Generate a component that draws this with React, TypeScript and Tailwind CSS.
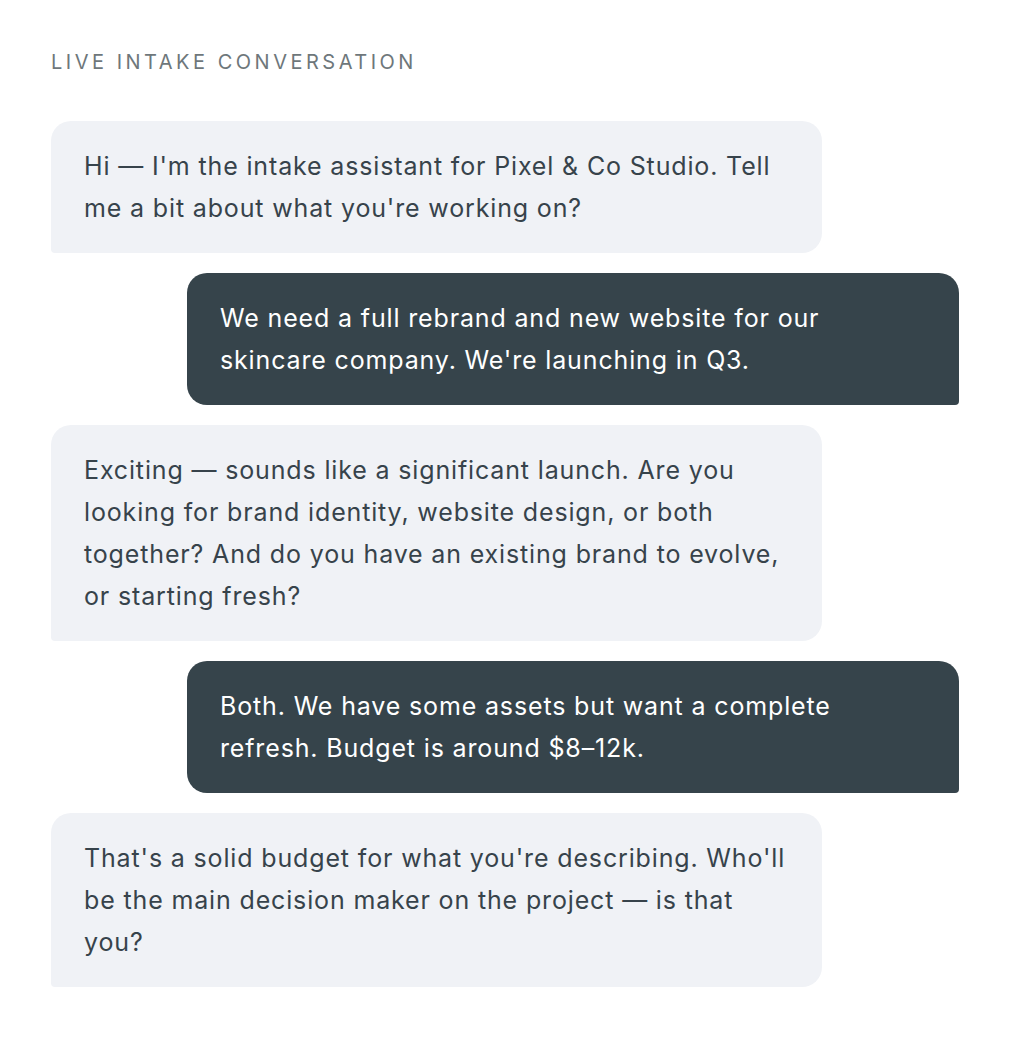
import React from "react";

type Msg = { from: "a" | "u"; lines: string[] };

const msgs: Msg[] = [
  { from: "a", lines: ["Hi — I'm the intake assistant for Pixel & Co Studio. Tell", "me a bit about what you're working on?"] },
  { from: "u", lines: ["We need a full rebrand and new website for our", "skincare company. We're launching in Q3."] },
  {
    from: "a",
    lines: [
      "Exciting — sounds like a significant launch. Are you",
      "looking for brand identity, website design, or both",
      "together? And do you have an existing brand to evolve,",
      "or starting fresh?",
    ],
  },
  { from: "u", lines: ["Both. We have some assets but want a complete", "refresh. Budget is around $8–12k."] },
  { from: "a", lines: ["That's a solid budget for what you're describing. Who'll", "be the main decision maker on the project — is that", "you?"] },
];

export default function App() {
  return (
    <div
      className="min-h-[1048px] w-[1014px] bg-white pl-[51px] pr-[55px] pt-[48px]"
      style={{ fontFamily: "Inter, 'Noto Sans', sans-serif" }}
    >
      <div className="h-[28px] text-[20px] leading-[28px] tracking-[3.5px] text-[#6e777b]">
        LIVE INTAKE CONVERSATION
      </div>
      <div className="mt-[45px] flex flex-col gap-[20px]">
        {msgs.map((m, i) =>
          m.from === "a" ? (
            <div key={i} className="flex justify-start">
              <div className="w-[771px] rounded-[20px] rounded-bl-[4px] bg-[#f0f2f6] px-[33px] py-[24px] text-[25px] leading-[42px] tracking-[0.85px] text-[#37434b]">
                {m.lines.map((l, j) => (
                  <div key={j} className="whitespace-nowrap">{l}</div>
                ))}
              </div>
            </div>
          ) : (
            <div key={i} className="flex justify-end">
              <div className="w-[772px] rounded-[20px] rounded-br-[4px] bg-[#36444b] px-[33px] py-[24px] text-[25px] leading-[42px] tracking-[0.85px] text-white">
                {m.lines.map((l, j) => (
                  <div key={j} className="whitespace-nowrap">{l}</div>
                ))}
              </div>
            </div>
          )
        )}
      </div>
    </div>
  );
}
